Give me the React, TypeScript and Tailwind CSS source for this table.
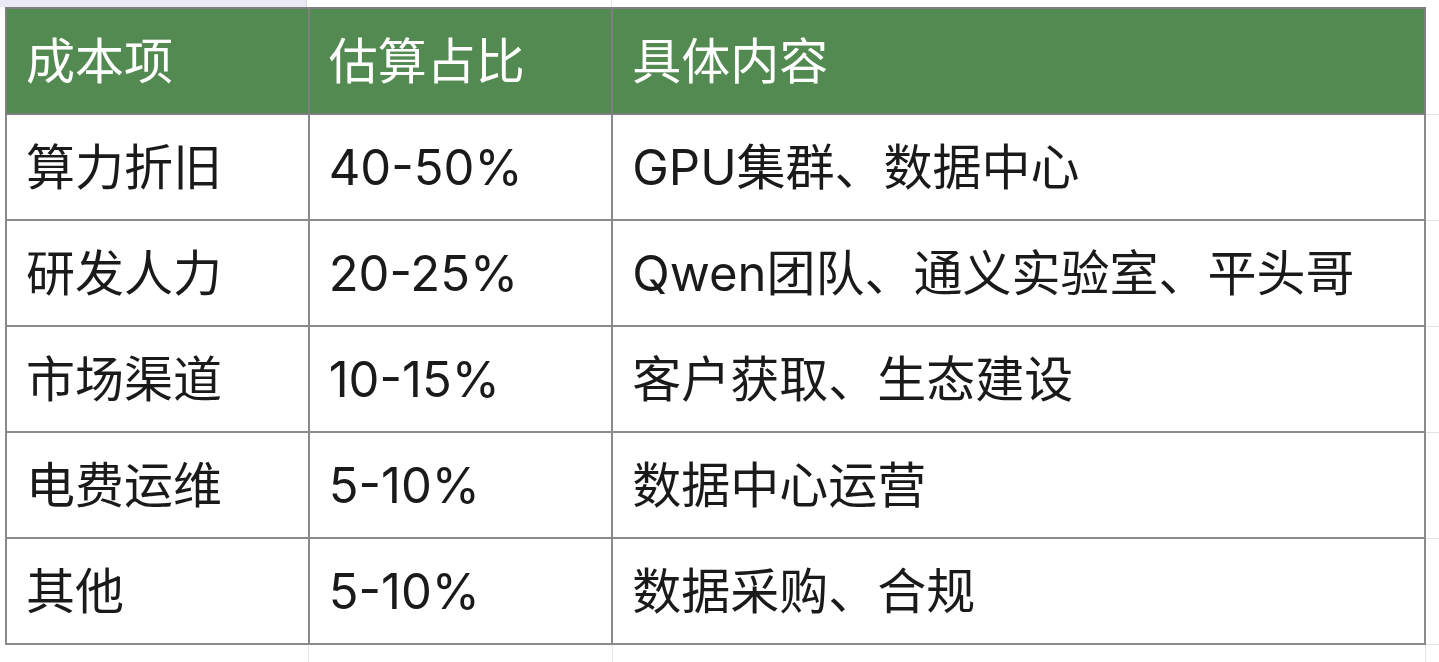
import React from "react";

const rows = [
  ["算力折旧", "40-50%", "GPU集群、数据中心"],
  ["研发人力", "20-25%", "Qwen团队、通义实验室、平头哥"],
  ["市场渠道", "10-15%", "客户获取、生态建设"],
  ["电费运维", "5-10%", "数据中心运营"],
  ["其他", "5-10%", "数据采购、合规"],
];

export default function App() {
  return (
    <div
      className="w-[1439px] h-[662px] bg-white overflow-hidden"
      style={{ fontFamily: 'Inter, "Noto Sans CJK SC", sans-serif' }}
    >
      <div className="flex h-[7px]">
        <div className="w-[307px] bg-[#ece9f7] border-r border-[#d8d8d8]" />
        <div className="w-[305px] border-r border-[#e4e4e4]" />
        <div className="flex-1" />
      </div>
      <table className="ml-[5px] border-collapse text-[49px] leading-none">
        <colgroup>
          <col className="w-[303px]" />
          <col className="w-[304px]" />
          <col className="w-[813px]" />
          <col className="w-[14px]" />
        </colgroup>
        <thead>
          <tr className="h-[106px]">
            {["成本项", "估算占比", "具体内容"].map((h) => (
              <th
                key={h}
                className="border-2 border-[#7f7f7f] bg-[#538a51] text-white font-normal text-left pl-[19px] align-middle"
              >
                {h}
              </th>
            ))}
            <td className="border-b border-[#e2e2e2]" />
          </tr>
        </thead>
        <tbody>
          {rows.map((r) => (
            <tr key={r[0]} className="h-[106px]">
              {r.map((c, i) => (
                <td
                  key={i}
                  className="border-2 border-[#8a8a8a] text-[#1a1a1a] pl-[19px] align-middle whitespace-nowrap"
                >
                  {c}
                </td>
              ))}
              <td className="border-b border-[#e2e2e2]" />
            </tr>
          ))}
          <tr className="h-[30px]">
            <td className="border-r border-[#e6e6e6]" />
            <td className="border-r border-[#e6e6e6]" />
            <td className="border-r border-[#e6e6e6]" />
            <td />
          </tr>
        </tbody>
      </table>
    </div>
  );
}
